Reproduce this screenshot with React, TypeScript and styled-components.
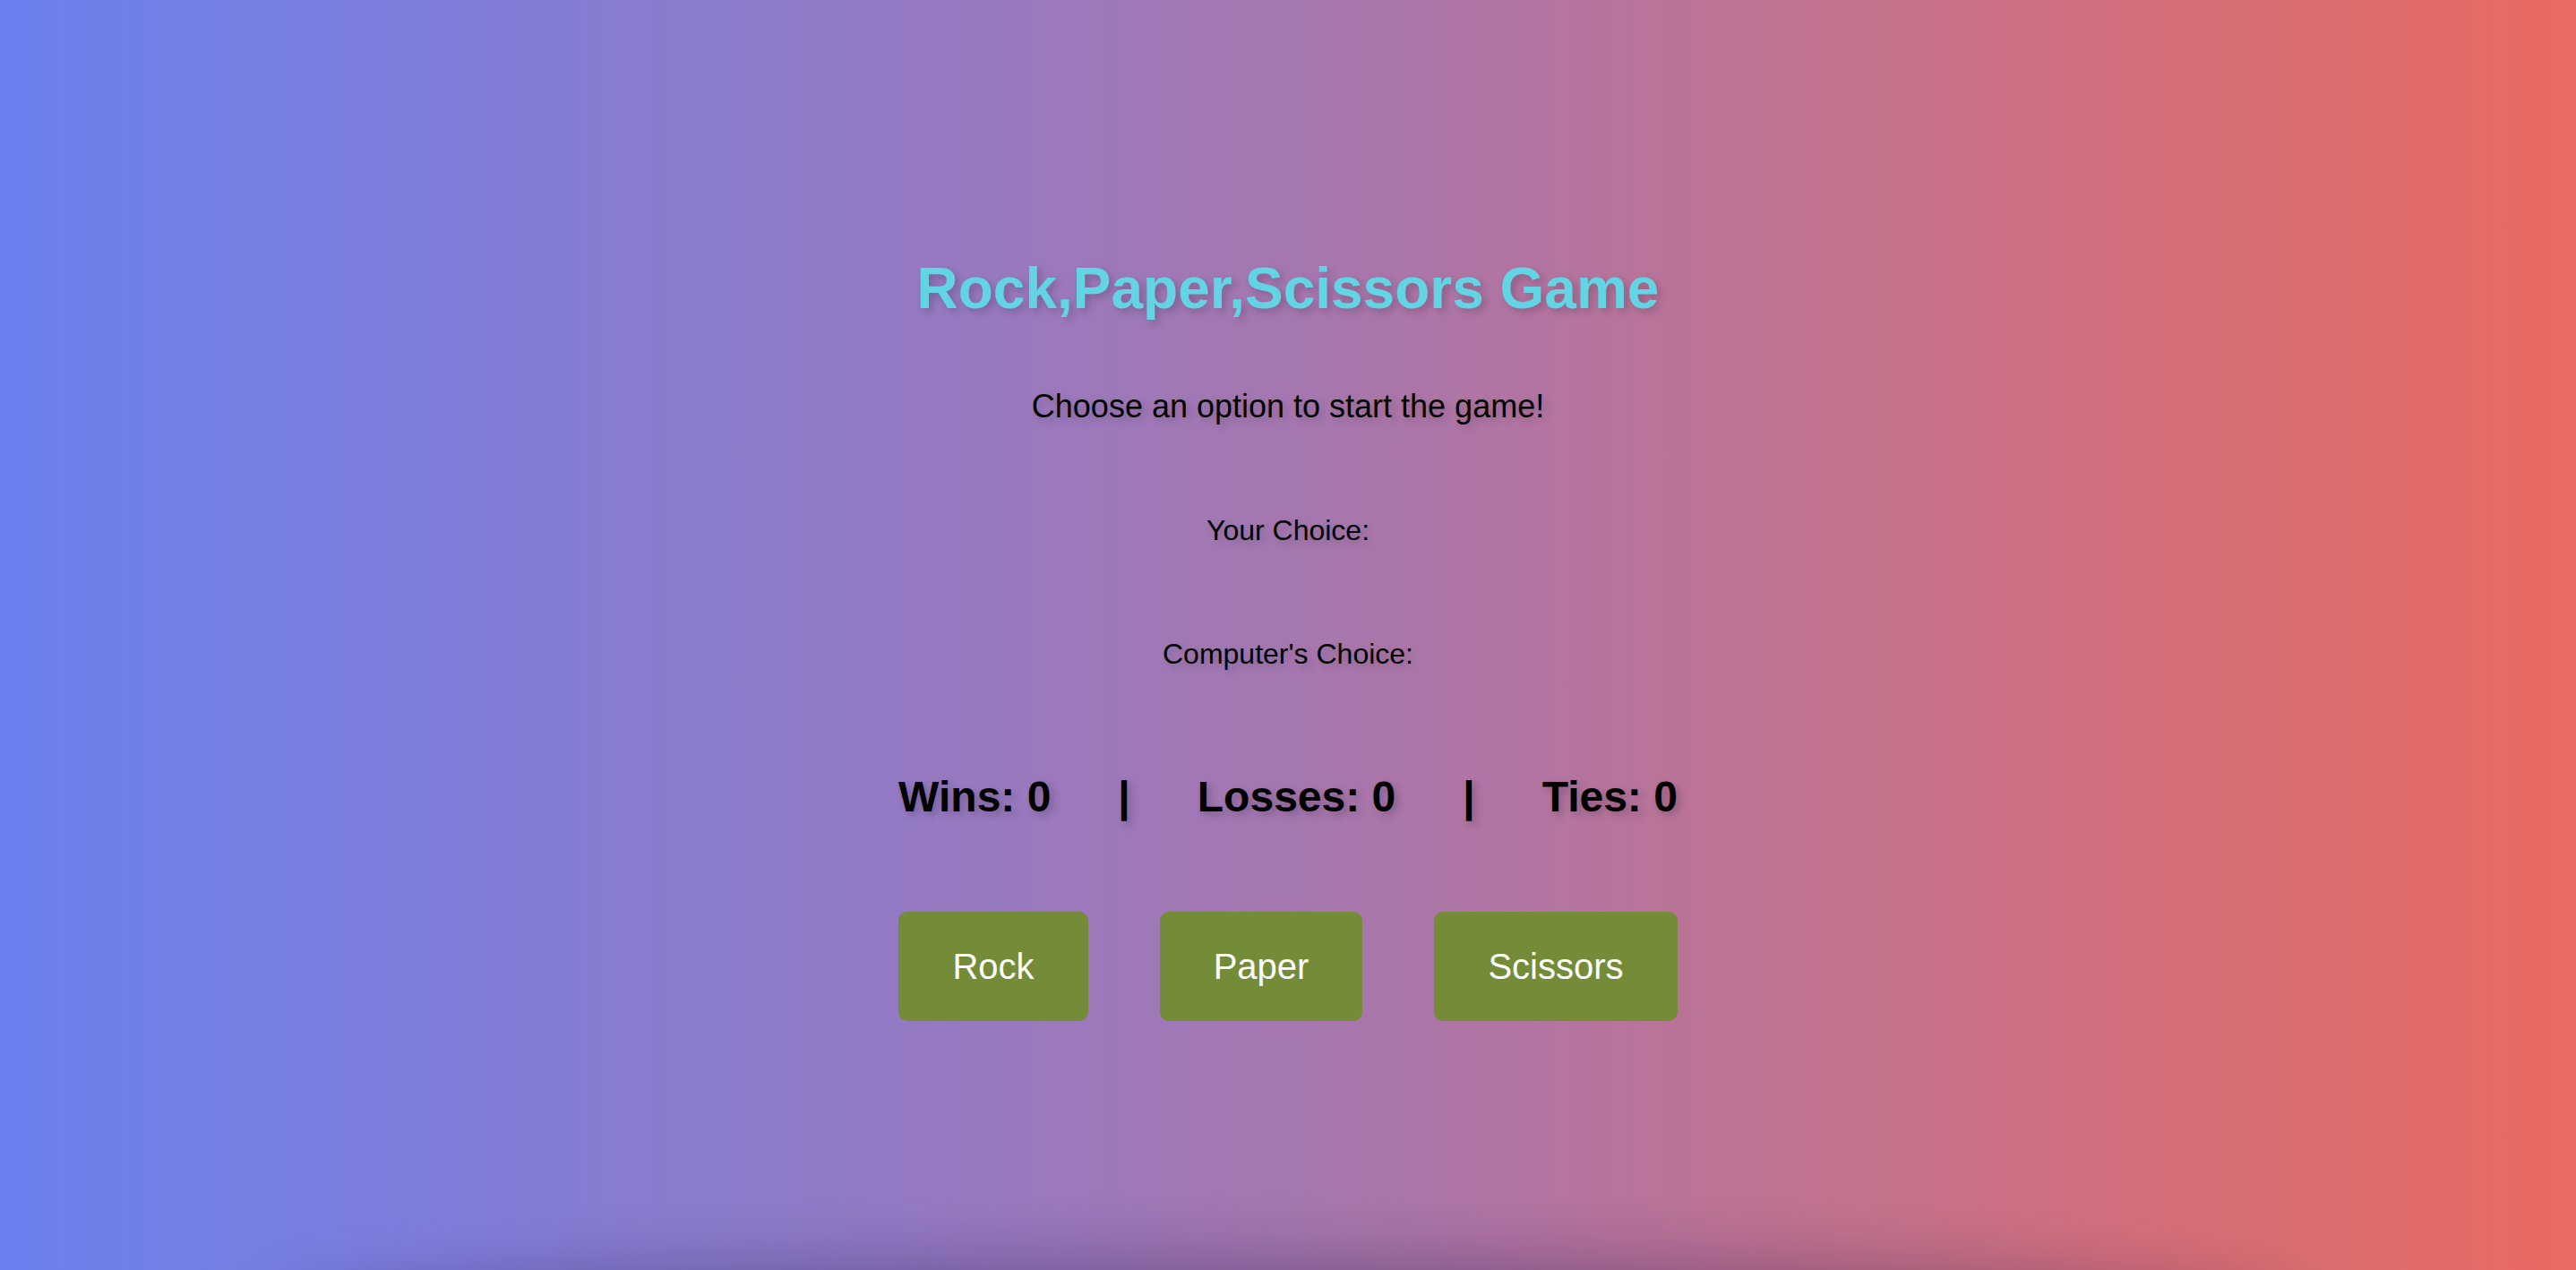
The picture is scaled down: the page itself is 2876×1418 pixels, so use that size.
import React, { useState } from "react";
import styled, { createGlobalStyle } from "styled-components";

const GlobalStyle = createGlobalStyle`
  html, body {
    margin: 0;
    padding: 0;
  }
  body {
    min-height: 100vh;
    background: linear-gradient(to right, #6a80ef, #a577b0 50%, #e96a60);
    font-family: "Liberation Sans", Arial, sans-serif;
    overflow: hidden;
  }
`;

const Page = styled.div`
  min-height: 100vh;
  display: flex;
  flex-direction: column;
  align-items: center;
  text-align: center;
`;

const Title = styled.h1`
  margin: 285px 0 0;
  font-size: 64px;
  line-height: 74px;
  font-weight: bold;
  color: #62d4e4;
  text-shadow: 4px 4px 8px rgba(0, 0, 0, 0.2);
`;

const Subtitle = styled.p`
  margin: 74px 0 0;
  font-size: 36px;
  line-height: 42px;
  color: #000;
  text-shadow: 4px 4px 8px rgba(0, 0, 0, 0.18);
`;

const ChoiceLine = styled.p<{ $top: number }>`
  margin: ${(p) => p.$top}px 0 0;
  font-size: 32px;
  line-height: 37px;
  color: #000;
  text-shadow: 4px 4px 8px rgba(0, 0, 0, 0.18);
`;

const Scoreboard = styled.h2`
  margin: 113px 0 0;
  display: flex;
  align-items: center;
  gap: 75px;
  font-size: 48px;
  line-height: 55px;
  font-weight: bold;
  color: #000;
  text-shadow: 4px 4px 8px rgba(0, 0, 0, 0.22);
`;

const ButtonRow = styled.div`
  margin-top: 101px;
  display: flex;
  gap: 80px;
`;

const ChoiceButton = styled.button`
  padding: 38px 60px;
  border: none;
  border-radius: 10px;
  background: #748c37;
  color: #fff;
  font-family: "Liberation Sans", Arial, sans-serif;
  font-size: 40px;
  line-height: 46px;
  cursor: pointer;
  &:hover {
    background: #6a8231;
  }
`;

const BottomShade = styled.div`
  position: fixed;
  left: 11%;
  right: 11%;
  bottom: -100px;
  height: 100px;
  border-radius: 50%;
  box-shadow: 0 0 70px 10px rgba(20, 10, 60, 0.3);
  pointer-events: none;
`;

const options = ["Rock", "Paper", "Scissors"];

export default function App() {
  const [player, setPlayer] = useState("");
  const [computer, setComputer] = useState("");
  const [score, setScore] = useState({ wins: 0, losses: 0, ties: 0 });

  const play = (choice: string) => {
    const comp = options[Math.floor(Math.random() * 3)];
    setPlayer(choice);
    setComputer(comp);
    const a = options.indexOf(choice);
    const b = options.indexOf(comp);
    if (a === b) setScore((s) => ({ ...s, ties: s.ties + 1 }));
    else if ((a - b + 3) % 3 === 1) setScore((s) => ({ ...s, wins: s.wins + 1 }));
    else setScore((s) => ({ ...s, losses: s.losses + 1 }));
  };

  return (
    <>
      <GlobalStyle />
      <Page>
        <Title>Rock,Paper,Scissors Game</Title>
        <Subtitle>Choose an option to start the game!</Subtitle>
        <ChoiceLine $top={99}>Your Choice: {player}</ChoiceLine>
        <ChoiceLine $top={101}>Computer's Choice: {computer}</ChoiceLine>
        <Scoreboard>
          <span>Wins: {score.wins}</span>
          <span>|</span>
          <span>Losses: {score.losses}</span>
          <span>|</span>
          <span>Ties: {score.ties}</span>
        </Scoreboard>
        <ButtonRow>
          {options.map((o) => (
            <ChoiceButton key={o} onClick={() => play(o)}>
              {o}
            </ChoiceButton>
          ))}
        </ButtonRow>
      </Page>
      <BottomShade />
    </>
  );
}
